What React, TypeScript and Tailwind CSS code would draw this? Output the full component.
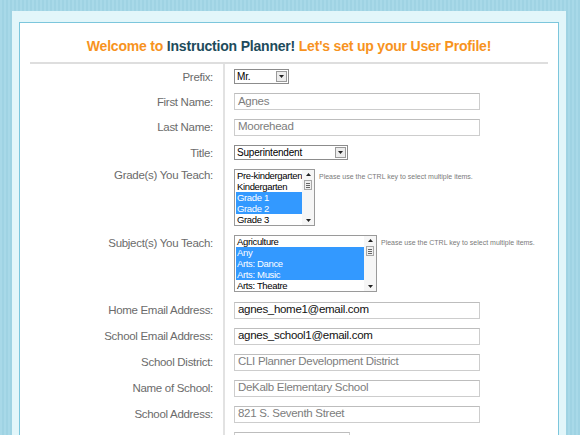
import React from 'react';

const labelCls =
  'w-[203px] shrink-0 pr-[10px] text-right text-[11.5px] leading-[14px] tracking-[-0.3px] text-[#6b6b6b]';

const Arrow: React.FC<{ up?: boolean }> = ({ up }) => (
  <svg width="5" height="3" viewBox="0 0 5 3" className="block">
    {up ? <path d="M0 3 L2.5 0 L5 3 Z" fill="#222" /> : <path d="M0 0 L5 0 L2.5 3 Z" fill="#222" />}
  </svg>
);

const Select: React.FC<{ value: string; width: string }> = ({ value, width }) => (
  <div className={`flex h-[15px] items-center border border-[#8c8c8c] bg-white ${width}`}>
    <span className="flex-1 pl-[2px] text-[10px] leading-none tracking-[-0.2px] text-black">{value}</span>
    <span className="mr-[1px] flex h-[11px] w-[11px] items-center justify-center border border-[#9a9a9a] bg-[#ececec]">
      <Arrow />
    </span>
  </div>
);

const TextInput: React.FC<{ value: string; dark?: boolean; width?: string }> = ({
  value,
  dark,
  width = 'w-[246px]',
}) => (
  <div
    className={`flex h-[17px] items-center border border-[#cdcdcd] border-t-[#bdbdbd] bg-white pl-[3px] text-[11.5px] leading-none tracking-[-0.3px] ${width} ${
      dark ? 'text-[#111]' : 'text-[#7d7d7d]'
    }`}
  >
    {value}
  </div>
);

const ListBox: React.FC<{ items: string[]; selected: number[]; width: string }> = ({ items, selected, width }) => (
  <div className={`flex h-[57px] shrink-0 border border-[#9a9a9a] bg-white ${width}`}>
    <div className="min-w-0 flex-1 overflow-hidden pl-[1px]">
      {items.map((item, i) => (
        <div
          key={item}
          className={`h-[11px] whitespace-nowrap pl-[1px] text-[9.5px] leading-[11px] tracking-[-0.35px] ${
            selected.includes(i) ? 'bg-[#3399ff] text-white' : 'text-black'
          }`}
        >
          {item}
        </div>
      ))}
    </div>
    <div className="flex w-[12px] shrink-0 flex-col items-center bg-[#f6f6f6] py-[3px]">
      <Arrow up />
      <div className="mt-[4px] flex h-[10px] w-[8px] flex-col items-center justify-center gap-[1px] border border-[#a8a8a8] bg-[#f0f0f0]">
        <span className="h-px w-[4px] bg-[#666]" />
        <span className="h-px w-[4px] bg-[#666]" />
        <span className="h-px w-[4px] bg-[#666]" />
      </div>
      <div className="flex-1" />
      <Arrow />
    </div>
  </div>
);

const Help: React.FC = () => (
  <span className="ml-[4px] mt-[4px] whitespace-nowrap text-[7px] leading-[8px] text-[#7a7a7a]">
    Please use the CTRL key to select multiple items.
  </span>
);

const Row: React.FC<{ label: string; h: string; children: React.ReactNode }> = ({ label, h, children }) => (
  <div className={`flex items-center ${h}`}>
    <div className={labelCls}>{label}</div>
    <div className="flex h-full flex-1 items-center border-l-2 border-[#e2e2e2] pl-[9px]">{children}</div>
  </div>
);

const App: React.FC = () => {
  return (
    <div className="h-[435px] overflow-hidden bg-[#a5d7e7] bg-[repeating-linear-gradient(90deg,#a8d9e8_0px,#a8d9e8_2px,#9fd3e3_2px,#9fd3e3_4px)] pl-[12px] pr-[14px] pt-[11px] font-['Liberation_Sans',Arial,sans-serif]">
      <div className="h-[600px] bg-[#e2f6fa] px-[7px] pt-[11px]">
        <div className="h-full border border-[#7cc6dc] bg-white">
          <h1 className="pt-[15px] text-center text-[14px] font-bold leading-[17px] tracking-[-0.2px] text-[#f7931e]">
            Welcome to <span className="text-[#1d4b5b]">Instruction Planner!</span> Let's set up your User Profile!
          </h1>
          <div className="mx-[10px] mt-[7px] h-[2px] bg-[#dedede]" />

          <Row label="Prefix:" h="h-[25px]">
            <Select value="Mr." width="w-[55px]" />
          </Row>
          <Row label="First Name:" h="h-[25px]">
            <TextInput value="Agnes" />
          </Row>
          <Row label="Last Name:" h="h-[26px]">
            <TextInput value="Moorehead" />
          </Row>
          <Row label="Title:" h="h-[25px]">
            <Select value="Superintendent" width="w-[114px]" />
          </Row>

          <div className="flex h-[66px]">
            <div className={`${labelCls} pt-[3px]`}>Grade(s) You Teach:</div>
            <div className="flex flex-1 items-start border-l-2 border-[#e2e2e2] pl-[9px] pt-[4px]">
              <ListBox
                width="w-[81px]"
                items={['Pre-kindergarten', 'Kindergarten', 'Grade 1', 'Grade 2', 'Grade 3']}
                selected={[2, 3]}
              />
              <Help />
            </div>
          </div>

          <div className="flex h-[66px]">
            <div className={`${labelCls} pt-[5px]`}>Subject(s) You Teach:</div>
            <div className="flex flex-1 items-start border-l-2 border-[#e2e2e2] pl-[9px] pt-[4px]">
              <ListBox
                width="w-[143px]"
                items={['Agriculture', 'Any', 'Arts: Dance', 'Arts: Music', 'Arts: Theatre']}
                selected={[1, 2, 3]}
              />
              <Help />
            </div>
          </div>

          <Row label="Home Email Address:" h="h-[26px]">
            <TextInput value="agnes_home1@email.com" dark />
          </Row>
          <Row label="School Email Address:" h="h-[26px]">
            <TextInput value="agnes_school1@email.com" dark />
          </Row>
          <Row label="School District:" h="h-[26px]">
            <TextInput value="CLI Planner Development District" />
          </Row>
          <Row label="Name of School:" h="h-[26px]">
            <TextInput value="DeKalb Elementary School" />
          </Row>
          <Row label="School Address:" h="h-[26px]">
            <TextInput value="821 S. Seventh Street" />
          </Row>
          <Row label="City:" h="h-[26px]">
            <TextInput value="" width="w-[116px]" />
          </Row>
        </div>
      </div>
    </div>
  );
};

export default App;
